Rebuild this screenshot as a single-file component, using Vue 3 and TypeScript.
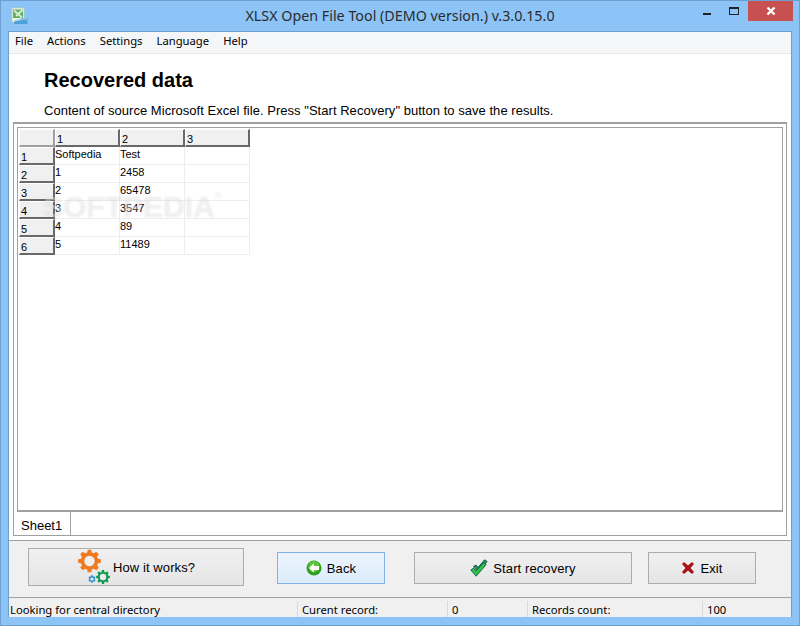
<script setup lang="ts">
  const menus = ['File', 'Actions', 'Settings', 'Language', 'Help'];
  const columns = ['1', '2', '3'];
  const rows = [
    ['Softpedia', 'Test', ''],
    ['1', '2458', ''],
    ['2', '65478', ''],
    ['3', '3547', ''],
    ['4', '89', ''],
    ['5', '11489', ''],
  ];

  // toothed wheel outline, centred on cx/cy
  const gear = (cx: number, cy: number, outer: number, inner: number, teeth: number) => {
    const pts: string[] = [];
    const step = (Math.PI * 2) / teeth;
    for (let i = 0; i < teeth; i++) {
      const a = i * step - Math.PI / 2;
      const at = (r: number, d: number) =>
        `${(cx + Math.cos(a + d * step) * r).toFixed(2)} ${(cy + Math.sin(a + d * step) * r).toFixed(2)}`;
      pts.push(at(inner, -0.34), at(outer, -0.2), at(outer, 0.2), at(inner, 0.34));
    }
    return `M${pts.join('L')}Z`;
  };
</script>

<template>
  <div class="window">
    <header class="titlebar">
      <div class="title-left">
        <svg class="app-icon" width="18" height="18" viewBox="0 0 18 18">
          <path d="M2 1h12v14H2z" fill="#f2f7ee" stroke="#b9cdb4" stroke-width="0.8" />
          <path d="M3 2.500h10V11H3z" fill="#5fae62" />
          <path d="M4 3.500l8 7M12.500 3L6 9" stroke="#d8f0d0" stroke-width="1.800" fill="none" />
          <path d="M4 17l1-4 5-.5 1-1.500h6.500v6z" fill="#4f9fd8" />
          <path d="M5 13.500l5-.5 1-1h6" stroke="#bfe3f7" fill="none" />
        </svg>
      </div>
      <div class="title">XLSX Open File Tool (DEMO version.) v.3.0.15.0</div>
      <div class="controls">
        <span class="minimize"></span>
        <span class="maximize"></span>
        <span class="close">
          <svg width="10" height="10" viewBox="0 0 10 10">
            <path d="M1.500 1.500l7 7M8.500 1.500l-7 7" stroke="#fff" stroke-width="2.400" fill="none" />
          </svg>
        </span>
      </div>
    </header>

    <div class="client">
      <nav class="menubar">
        <span v-for="m in menus" :key="m" class="menu-item">{{ m }}</span>
      </nav>

      <main class="content">
        <h1 class="heading">Recovered data</h1>
        <p class="subheading">Content of source Microsoft Excel file. Press "Start Recovery" button to save the results.</p>

        <section class="panel">
          <div class="grid-frame">
            <div class="sheet">
              <div class="cell head corner"></div>
              <div v-for="c in columns" :key="c" class="cell head">{{ c }}</div>
              <template v-for="(row, i) in rows" :key="i">
                <div class="cell head row-head">{{ i + 1 }}</div>
                <div v-for="(val, j) in row" :key="j" class="cell">{{ val }}</div>
              </template>
            </div>
            <div class="watermark">SOFTPEDIA<sup>®</sup></div>
          </div>
          <div class="tabs">
            <span class="tab">Sheet1</span>
          </div>
        </section>
      </main>

      <div class="actions">
        <button class="btn how">
          <svg width="36" height="36" viewBox="0 0 36 36">
            <path :d="gear(12.5, 12, 11.5, 8.800, 8)" fill="#ee7b22" />
            <circle cx="12.500" cy="12" r="5.200" fill="#efefef" />
            <path :d="gear(26, 28, 7, 5.300, 8)" fill="#119a52" />
            <circle cx="26" cy="28" r="3.200" fill="#ececec" />
            <path :d="gear(15, 30, 3.800, 2.900, 6)" fill="#2a93cf" />
            <circle cx="15" cy="30" r="1.600" fill="#ececec" />
          </svg>
          <span>How it works?</span>
        </button>
        <button class="btn back">
          <svg width="16" height="16" viewBox="0 0 16 16">
            <circle cx="8" cy="8" r="7.500" fill="#2e9f1c" />
            <circle cx="8" cy="6.500" r="5.800" fill="#6fd04a" opacity="0.7" />
            <path d="M7.800 3.200L3 8l4.800 4.800V10H13V6H7.800z" fill="#fff" />
          </svg>
          <span>Back</span>
        </button>
        <button class="btn start">
          <svg width="18" height="18" viewBox="0 0 18 18">
            <path d="M3.500 7.500l2.500-1.500 2 2.500L14.500 0.800l2.700 1.700L8 12.500z" fill="#1aa52c" stroke="#0c3f66" stroke-width="0.800" />
            <path d="M0.800 11l2.700-2 2.500 3L13.500 3.500l2.700 2L6.200 17.200z" fill="#2cc636" stroke="#0c3f66" stroke-width="0.800" />
          </svg>
          <span>Start recovery</span>
        </button>
        <button class="btn exit">
          <svg width="14" height="14" viewBox="0 0 14 14">
            <path d="M1 3l2-2 4 3.500L11 1l2 2-3.500 4L13 11l-2 2-4-3.500L3 13l-2-2 3.500-4z" fill="#a80f18" />
          </svg>
          <span>Exit</span>
        </button>
      </div>

      <footer class="statusbar">
        <div class="status s1">Looking for central directory</div>
        <div class="status s2">Curent record:</div>
        <div class="status s3">0</div>
        <div class="status s4">Records count:</div>
        <div class="status s5">100</div>
      </footer>
    </div>
  </div>
</template>

<style>
  html,
  body {
    margin: 0;
    background: #8cc4f8;
  }
</style>

<style scoped>
  .window {
    box-sizing: border-box;
    width: 800px;
    height: 626px;
    display: flex;
    flex-direction: column;
    background: #8cc4f8;
    border: 1px solid #6f9fcf;
    padding: 0 7px 8px;
    font-family: 'Liberation Sans', Arial, sans-serif;
    color: #000;
    overflow: hidden;
  }

  .titlebar {
    height: 30px;
    flex: none;
    display: grid;
    grid-template-columns: 1fr auto 1fr;
    align-items: start;
  }

  .title-left {
    padding: 6px 0 0 2px;
  }

  .app-icon {
    display: block;
  }

  .title {
    font-family: 'Noto Sans', sans-serif;
    font-size: 14.3px;
    line-height: 30px;
    color: #2b2b2b;
  }

  .controls {
    justify-self: end;
    display: flex;
    align-items: flex-start;
    margin-right: -1px;
  }

  .minimize {
    width: 8px;
    height: 2px;
    background: #222;
    margin: 12px 18px 0 0;
  }

  .maximize {
    box-sizing: border-box;
    width: 10px;
    height: 8px;
    border: 1px solid #222;
    border-top-width: 2px;
    margin: 6px 9px 0 0;
  }

  .close {
    width: 45px;
    height: 20px;
    background: #c75050;
    display: flex;
    align-items: center;
    justify-content: center;
  }

  .client {
    flex: 1;
    min-height: 0;
    display: flex;
    flex-direction: column;
    background: #f0f0f0;
    border: 1px solid #6f9fcf;
    border-bottom: 0;
    box-sizing: border-box;
  }

  .menubar {
    flex: none;
    display: flex;
    align-items: center;
    gap: 14px;
    padding: 0 0 5px 6px;
    height: 16px;
    background: #f5f6f7;
    border-bottom: 1px solid #e9e9ea;
    font-family: 'Noto Sans', sans-serif;
    font-size: 11.25px;
  }

  .content {
    flex: 1;
    min-height: 0;
    display: flex;
    flex-direction: column;
    background: #fff;
    border-bottom: 1px solid #a0a0a0;
    padding: 0 4px 4px 4px;
  }

  .heading {
    margin: 15px 0 0 31px;
    font-size: 20px;
    line-height: 23px;
    font-weight: 700;
  }

  .subheading {
    margin: 11px 0 0 31px;
    font-size: 13px;
    line-height: 16px;
    letter-spacing: 0.035px;
  }

  .panel {
    flex: 1;
    min-height: 0;
    margin-top: 3px;
    display: flex;
    flex-direction: column;
    border: 1px solid #a0a0a0;
    border-top-width: 2px;
    padding: 3px 3px 0;
  }

  .grid-frame {
    flex: 1;
    min-height: 0;
    position: relative;
    border: 1px solid #a0a0a0;
    border-width: 1px 1px 2px;
    padding: 1px;
    background: #fff;
  }

  .sheet {
    display: grid;
    grid-template-columns: 36px 65px 65px 65px;
    grid-auto-rows: 18px;
    width: 231px;
    font-size: 11px;
  }

  .cell {
    box-sizing: border-box;
    border-right: 1px solid #ededed;
    border-bottom: 1px solid #ededed;
    padding: 0 0 3px 0;
    display: flex;
    align-items: center;
  }

  .head {
    background: #f0f0f0;
    border-top: 1px solid #fff;
    border-left: 1px solid #fff;
    border-right: 2px solid #696969;
    border-bottom: 2px solid #696969;
    padding: 2px 0 0 1px;
    font-size: 11px;
  }

  .corner {
    border-right-color: #a0a0a0;
    border-bottom-color: #a0a0a0;
  }

  .watermark {
    position: absolute;
    left: 25px;
    top: 62px;
    font-size: 30px;
    font-weight: 700;
    color: rgba(255, 255, 255, 0.4);
    text-shadow: 0 0 2px rgba(0, 0, 0, 0.1);
    pointer-events: none;
  }

  .watermark sup {
    font-size: 9px;
    font-weight: 400;
    vertical-align: 18px;
    line-height: 0;
  }

  .tabs {
    height: 23px;
    flex: none;
    display: flex;
  }

  .tab {
    box-sizing: border-box;
    width: 54px;
    padding-left: 4px;
    line-height: 27px;
    font-size: 13px;
    border-right: 1px solid #a0a0a0;
  }

  .actions {
    height: 57px;
    flex: none;
    display: flex;
    align-items: flex-start;
    padding: 11px 0 0 19px;
    border-bottom: 1px solid #a0a0a0;
    box-sizing: border-box;
  }

  .btn {
    box-sizing: border-box;
    height: 32px;
    display: flex;
    align-items: center;
    justify-content: center;
    gap: 5px;
    padding: 0;
    border: 1px solid #acacac;
    background: linear-gradient(#f0f0f0, #e5e5e5);
    font-family: 'Liberation Sans', Arial, sans-serif;
    font-size: 13px;
    letter-spacing: 0.1px;
    color: #000;
  }

  .how {
    width: 216px;
    height: 38px;
    gap: 0;
    margin: -4px 33px 0 0;
  }

  .back {
    width: 108px;
    background: linear-gradient(#ebf4fc, #dcecfc);
    border-color: #7eb4ea;
    margin-right: 29px;
  }

  .start {
    width: 218px;
    margin-right: 16px;
  }

  .exit {
    width: 108px;
  }

  .statusbar {
    height: 19px;
    flex: none;
    display: flex;
    align-items: flex-end;
    font-family: 'Noto Sans', sans-serif;
    font-size: 11.25px;
  }

  .status {
    box-sizing: border-box;
    height: 16px;
    line-height: 17px;
    padding-left: 1px;
    white-space: nowrap;
    border-right: 1px solid #d9d9d9;
  }

  .s1 {
    width: 289px;
  }

  .s2,
  .s3 {
    padding-left: 4px;
  }

  .s2 {
    width: 150px;
  }

  .s3 {
    width: 80px;
  }

  .s4 {
    padding-left: 4px;
    width: 175px;
  }

  .s5 {
    padding-left: 4px;
    flex: 1;
    border-right: 0;
  }
</style>
